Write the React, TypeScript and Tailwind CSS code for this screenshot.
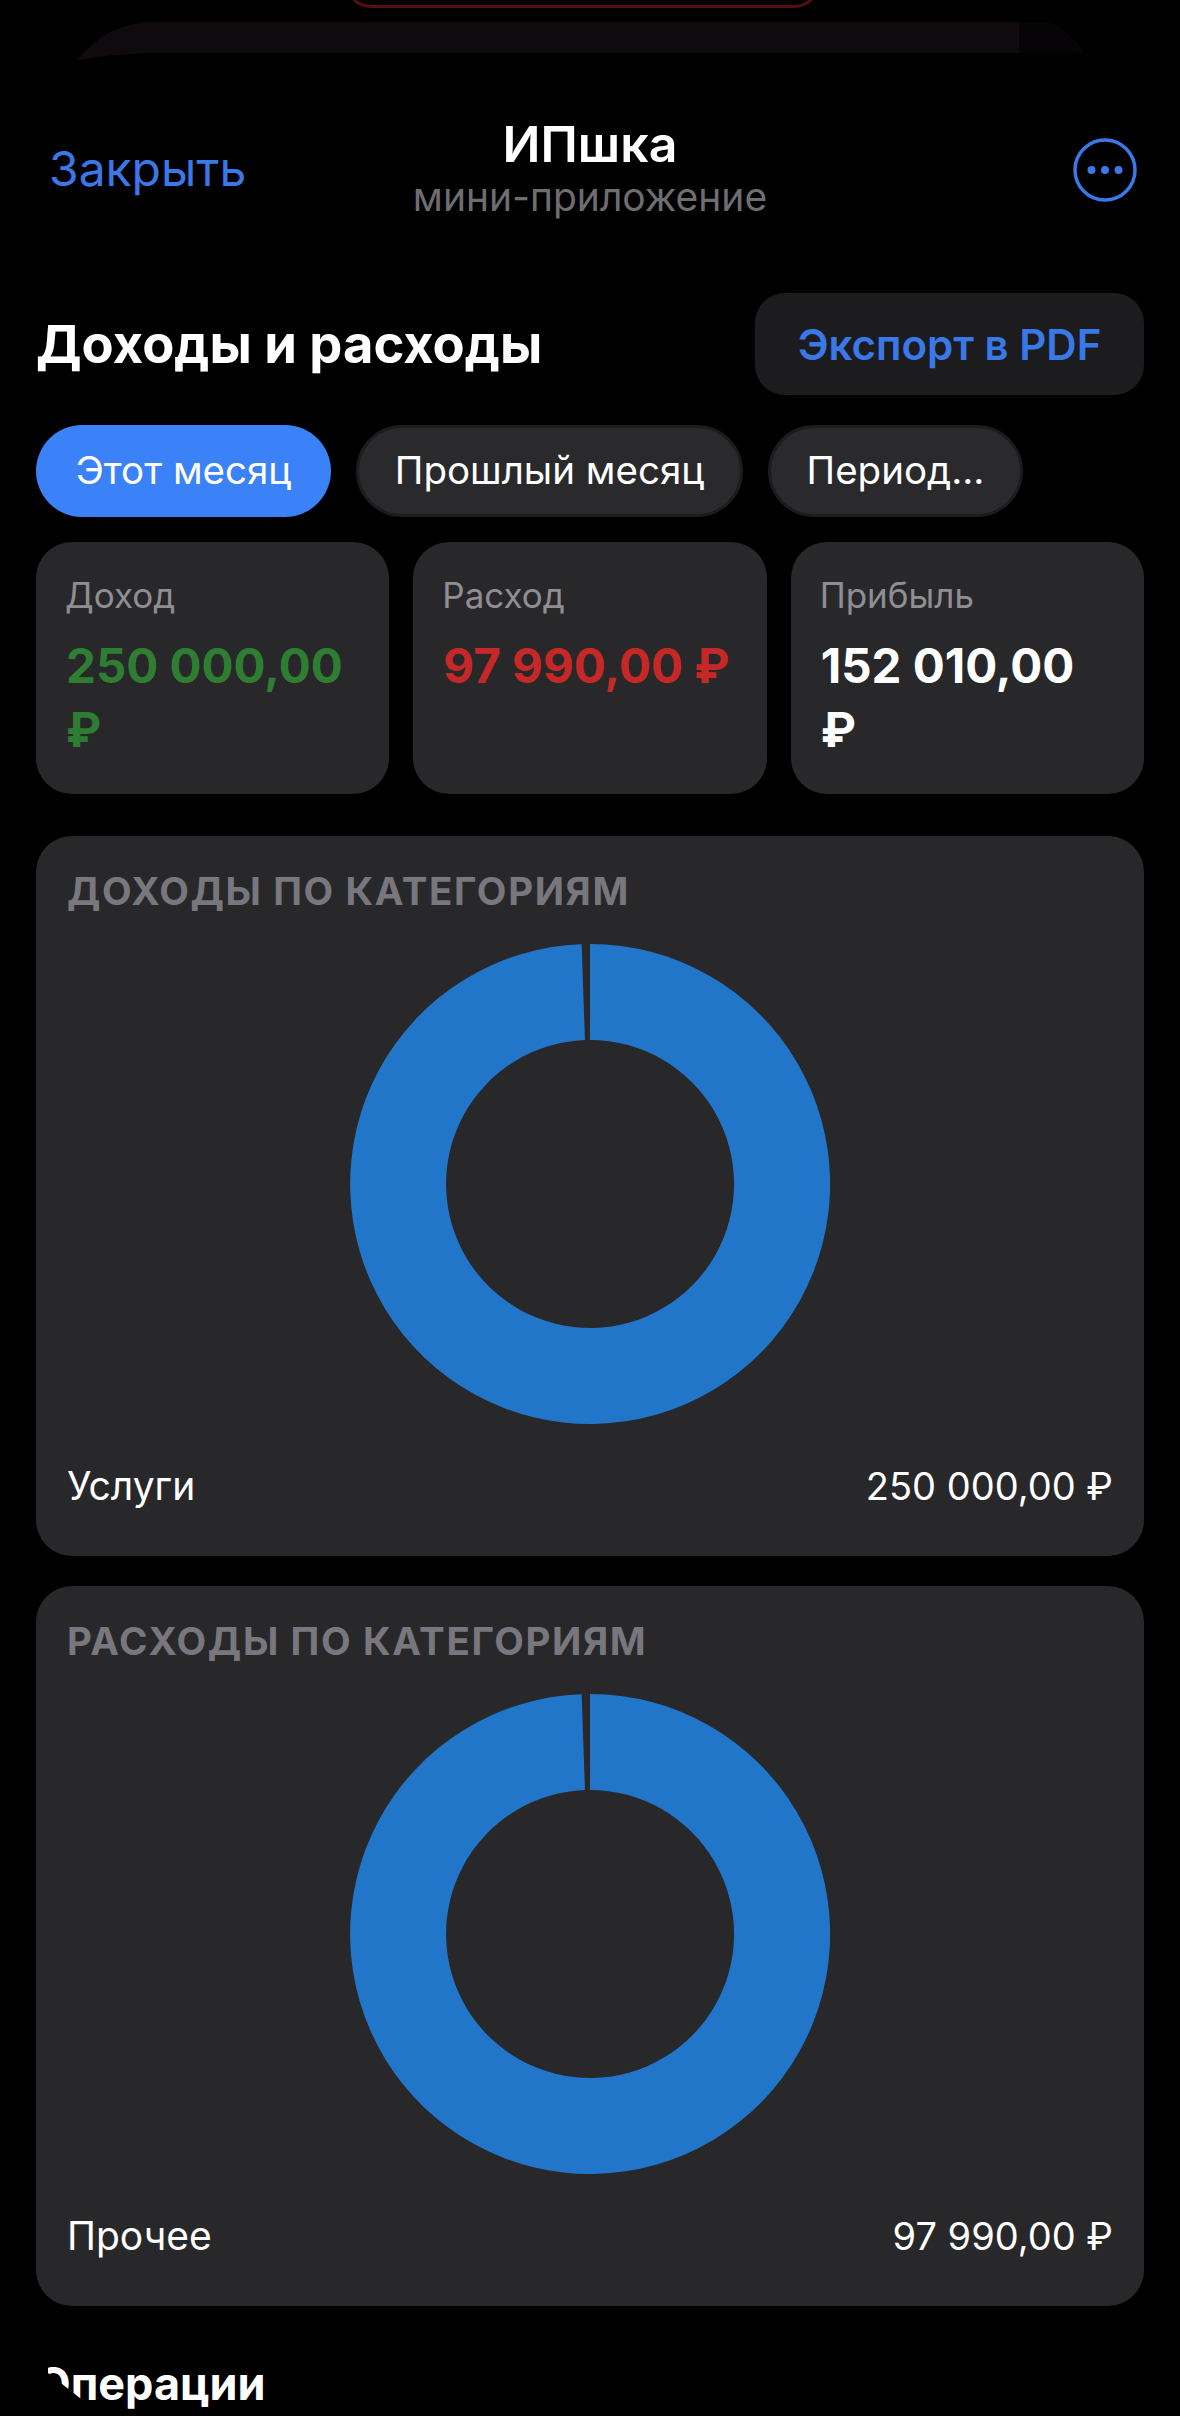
const font = { fontFamily: "Inter, 'Noto Sans', sans-serif" };

function Donut() {
  return (
    <svg width="480" height="480" viewBox="0 0 480 480" className="block">
      <path
        d="M240 0 A240 240 0 1 1 231.62 0.15 L234.97 96.09 A144 144 0 1 0 240 96 Z"
        fill="#2176c9"
      />
    </svg>
  );
}

function Stat({ label, value, color }: { label: string; value: string; color: string }) {
  return (
    <div className="h-[252px] rounded-[36px] bg-[#28282a] px-[30px] pt-[31px]">
      <div className="-ml-px text-[35px] leading-[44px] text-[#8e8e93]">{label}</div>
      <div className={`mt-[17px] text-[47.5px] font-bold leading-[64px] ${color}`}>{value}</div>
    </div>
  );
}

function ChartCard({ title, name, value }: { title: string; name: string; value: string }) {
  return (
    <section className="h-[720px] rounded-[36px] bg-[#28282a] px-[31px] pt-[32px]">
      <h2 className="text-[38.5px] font-bold uppercase leading-[46px] tracking-[1.6px] text-[#77777d]">{title}</h2>
      <div className="mt-[30px] flex justify-center">
        <Donut />
      </div>
      <div className="mt-[38px] flex justify-between leading-[48px] text-white">
        <span className="text-[39px]">{name}</span>
        <span className="text-[38px]">{value}</span>
      </div>
    </section>
  );
}

export default function App() {
  return (
    <div style={font} className="h-[2416px] w-[1180px] overflow-hidden bg-black text-white">
      <div className="relative h-[53px]">
        <div className="absolute left-[345px] top-[-18px] h-[26px] w-[475px] rounded-b-[26px] border-x-[3px] border-b-[3px] border-[#4f1018]" />
        <svg width="1180" height="62" viewBox="0 0 1180 62" className="absolute left-0 top-0">
          <path d="M77 60 Q108 22 153 22 L1019 22 L1019 53 L153 53 Q112 54 77 60 Z" fill="#0e0a0d" />
          <path d="M1019 22 L1050 22 Q1070 30 1084 53 L1019 53 Z" fill="#060406" />
        </svg>
      </div>

      <header className="grid h-[190px] grid-cols-[1fr_auto_1fr] items-start px-[49px]">
        <div className="mt-[88px] text-[48px] leading-[56px] text-[#3a78e8]">Закрыть</div>
        <div className="mt-[60px] flex flex-col items-center">
          <div className="text-[50px] font-semibold leading-[62px]">ИПшка</div>
          <div className="text-[39px] leading-[44px] text-[#6e6e72]">мини-приложение</div>
        </div>
        <svg width="64" height="64" viewBox="0 0 64 64" className="-mr-[6px] mt-[85px] justify-self-end">
          <circle cx="32" cy="32" r="30" fill="none" stroke="#3a78e8" strokeWidth="3.5" />
          <circle cx="18.5" cy="32" r="4" fill="#3a78e8" />
          <circle cx="32" cy="32" r="4" fill="#3a78e8" />
          <circle cx="45.5" cy="32" r="4" fill="#3a78e8" />
        </svg>
      </header>

      <main className="px-[36px]">
        <div className="mt-[50px] flex h-[102px] items-center justify-between">
          <h1 className="text-[52.5px] font-bold leading-[60px]">Доходы и расходы</h1>
          <button className="h-[102px] w-[389px] rounded-[30px] bg-[#1c1c1e] text-[42px] font-semibold text-[#3a78e8]">
            Экспорт в PDF
          </button>
        </div>

        <div className="mt-[30px] flex gap-[25px] text-[38.5px]">
          <div className="flex h-[92px] w-[295px] items-center justify-center rounded-full bg-[#3b82f8]">Этот месяц</div>
          <div className="flex h-[92px] w-[387px] items-center justify-center rounded-full border-[3px] border-[#1c1c1e] bg-[#2a2a2c]">Прошлый месяц</div>
          <div className="flex h-[92px] w-[255px] items-center justify-center rounded-full border-[3px] border-[#1c1c1e] bg-[#2a2a2c]">Период...</div>
        </div>

        <div className="mt-[25px] grid grid-cols-3 gap-[24px]">
          <Stat label="Доход" value="250 000,00 ₽" color="text-[#2e7d32]" />
          <Stat label="Расход" value="97 990,00 ₽" color="text-[#c62828]" />
          <Stat label="Прибыль" value="152 010,00 ₽" color="text-white" />
        </div>

        <div className="mt-[42px] flex flex-col gap-[30px]">
          <ChartCard title="Доходы по категориям" name="Услуги" value="250 000,00 ₽" />
          <ChartCard title="Расходы по категориям" name="Прочее" value="97 990,00 ₽" />
        </div>

        <h2 className="relative mt-[50px] text-[45px] font-bold leading-[56px]">
          Операции
          <svg width="50" height="60" viewBox="0 0 50 60" className="absolute left-0 top-0">
            <path d="M0 0 L12 0 L12 17 L49 46 L49 60 L0 60 Z" fill="#000" />
          </svg>
        </h2>
      </main>
    </div>
  );
}
